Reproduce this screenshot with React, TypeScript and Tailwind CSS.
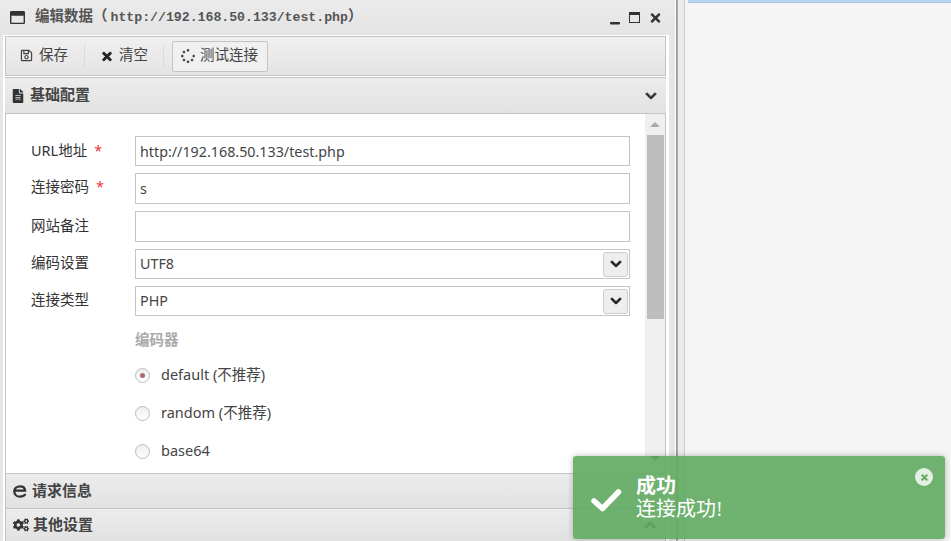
import React from 'react';
import {
  FaRegWindowMaximize,
  FaWindowMinimize,
  FaTimes,
  FaRegSave,
  FaSpinner,
  FaFileAlt,
  FaChevronDown,
  FaChevronUp,
  FaCogs,
} from 'react-icons/fa';

const uiFont = "font-['Noto_Sans','Noto_Sans_CJK_SC',sans-serif]";

const fields = [
  { label: 'URL地址', value: 'http://192.168.50.133/test.php', required: true, h: 'h-[30px]', lift: 'pb-[1px]' },
  { label: '连接密码', value: 's', required: true, h: 'h-[31px]', lift: 'pb-[3px]' },
  { label: '网站备注', value: '', required: false, h: 'h-[31px]', lift: 'pb-[1px]' },
];

const selects = [
  { label: '编码设置', value: 'UTF8' },
  { label: '连接类型', value: 'PHP' },
];

const encoders = [
  { label: 'default (不推荐)', checked: true },
  { label: 'random (不推荐)', checked: false },
  { label: 'base64', checked: false },
];

const SectionHeader: React.FC<{
  icon: React.ReactNode;
  title: string;
  chevron?: React.ReactNode;
  className: string;
  iconBox: string;
}> = ({ icon, title, chevron, className, iconBox }) => (
  <div
    className={`flex items-center shrink-0 bg-gradient-to-b from-[#ececec] to-[#e2e2e2] border-t border-[#c4c4c4] pl-[7px] pr-[9px] ${className}`}
  >
    <span className={`flex justify-start text-[#333] ${iconBox}`}>{icon}</span>
    <span className="text-[15px] font-bold text-[#444] pb-[2px]">{title}</span>
    {chevron && <span className="ml-auto text-[#333]">{chevron}</span>}
  </div>
);

const App: React.FC = () => {
  return (
    <div className={`relative flex w-[951px] h-[541px] overflow-hidden bg-[#f5f5f5] ${uiFont}`}>
      {/* Left window */}
      <div className="flex flex-col w-[675px] h-full bg-[#e6e6e6] shrink-0">
        <div className="flex items-center h-[35px] shrink-0 pl-[10px] pr-[13px] bg-gradient-to-b from-[#ebebeb] to-[#e4e4e4]">
          <FaRegWindowMaximize className="w-[15px] h-[15px] text-[#333]" />
          <span className="ml-[10px] text-[14.5px] font-bold text-[#555] font-['Liberation_Mono','Noto_Sans_CJK_SC',monospace]">
            编辑数据（<span className="ml-[3px] text-[13.2px]">http://192.168.50.133/test.php</span>）
          </span>
          <div className="ml-auto flex items-center text-[#333]">
            <FaWindowMinimize className="w-[10px] h-[10px] mt-[4px]" />
            <span className="ml-[9px] w-[11px] h-[11px] border border-[#333] border-t-[3px]" />
            <FaTimes className="ml-[9px] w-[13px] h-[14px]" />
          </div>
        </div>

        <div className="flex-1 min-h-0 flex flex-col ml-[3px] mr-[6px] bg-white border-t border-white px-[2px] pr-[3px]">
          {/* Toolbar */}
          <div className="flex items-center h-[40px] shrink-0 bg-gradient-to-b from-[#f0f0f0] to-[#e4e4e4] border border-[#c4c4c4] text-[14.5px] text-[#444]">
            <div className="flex items-center pl-[14px] w-[78px]">
              <FaRegSave className="w-[13px] h-[13px] text-[#444] mb-[1px]" />
              <span className="ml-[6px] pb-[3px]">保存</span>
            </div>
            <span className="w-px h-[25px] bg-[#d4dde0]" />
            <div className="flex items-center pl-[16px] w-[78px]">
              <FaTimes className="w-[12px] h-[13px] text-[#222] [stroke-width:30px]" />
              <span className="ml-[6px] pb-[3px]">清空</span>
            </div>
            <span className="w-px h-[25px] bg-[#d4dde0]" />
            <div className="ml-[8px] flex items-center h-[31px] w-[96px] pl-[8px] rounded-[2px] border border-[#c4c4c4] bg-[#f0f0f0]">
              <FaSpinner className="w-[14px] h-[14px] text-[#444]" />
              <span className="ml-[5px] pb-[3px]">测试连接</span>
            </div>
          </div>

          <div className="h-px bg-white shrink-0" />

          <SectionHeader
            className="h-[36px]"
            iconBox="w-[18px]"
            icon={<FaFileAlt className="w-[12px] h-[14px]" />}
            title="基础配置"
            chevron={<FaChevronDown className="w-[12px] h-[12px] [stroke-width:40px]" />}
          />

          {/* Form body */}
          <div className="flex h-[360px] shrink-0 border-x border-t border-[#c4c4c4] overflow-hidden">
            <div className="flex-1 min-w-0 pt-[22px] pl-[25px] text-[14.5px] text-[#333]">
              <div className="flex flex-col gap-[7px]">
                {fields.map((f) => (
                  <div key={f.label} className={`flex items-center ${f.h}`}>
                    <label className={`w-[104px] shrink-0 ${f.lift}`}>
                      {f.label}
                      {f.required && <span className="ml-[7px] text-[#e33]">*</span>}
                    </label>
                    <input
                      readOnly
                      value={f.value}
                      className="w-[495px] h-full border border-[#c4c4c4] px-[4px] text-[14.3px] text-[#444] bg-white outline-none"
                    />
                  </div>
                ))}
                {selects.map((s) => (
                  <div key={s.label} className="flex items-center h-[30px]">
                    <label className="w-[104px] shrink-0 pb-[2px]">{s.label}</label>
                    <div className="flex items-center justify-between w-[495px] h-full border border-[#c4c4c4] pl-[4px] pr-[1px] text-[14.3px] text-[#444] bg-white">
                      <span>{s.value}</span>
                      <span className="flex items-center justify-center w-[25px] h-[25px] rounded-[3px] border border-[#ccc] bg-[#eeeeee] text-[#222]">
                        <FaChevronDown className="w-[12px] h-[12px] [stroke-width:40px]" />
                      </span>
                    </div>
                  </div>
                ))}
              </div>
              <div className="ml-[104px] mt-[13px] font-bold text-[#aaa] leading-[20px]">编码器</div>
              <div className="ml-[104px] mt-[16px] flex flex-col gap-[18px]">
                {encoders.map((e) => (
                  <div key={e.label} className="flex items-center h-[20px]">
                    <span className="flex items-center justify-center w-[15px] h-[15px] rounded-full border border-[#bbb] bg-gradient-to-b from-[#eee] to-white">
                      {e.checked && <span className="w-[5px] h-[5px] rounded-full bg-[#a86a6a]" />}
                    </span>
                    <span className="ml-[11px] text-[#444]">{e.label}</span>
                  </div>
                ))}
              </div>
            </div>
            {/* Scrollbar */}
            <div className="relative flex flex-col items-center w-[20px] shrink-0 bg-[#f0f0f0]">
              <span className="mt-[8px] w-0 h-0 border-x-[5px] border-x-transparent border-b-[5px] border-b-[#aaa]" />
              <span className="mt-[8px] w-[17px] h-[184px] bg-[#bdbdbd]" />
              <span className="mt-[137px] w-0 h-0 border-x-[5px] border-x-transparent border-t-[5px] border-t-[#555]" />
            </div>
          </div>

          <SectionHeader
            className="h-[35px] border-x border-x-[#c4c4c4]"
            iconBox="w-[19px]"
            icon={
              <svg viewBox="0 0 14 13" className="w-[14px] h-[13px]" fill="none" stroke="currentColor" strokeWidth="2.3">
                <path d="M2.5 5.6h9.6C11.9 3 10 1.3 7.2 1.3 3.9 1.3 1.3 3.3 1.3 6.4c0 3.2 2.5 5.3 5.7 5.3 2.4 0 4.2-.8 5.6-2.6" />
              </svg>
            }
            title="请求信息"
          />
          <SectionHeader
            className="h-[33px] border-x border-x-[#c4c4c4]"
            iconBox="w-[20px]"
            icon={<FaCogs className="w-[16px] h-[14px]" />}
            title="其他设置"
            chevron={<FaChevronUp className="w-[12px] h-[12px] [stroke-width:40px]" />}
          />
        </div>
      </div>

      {/* Splitter */}
      <div className="flex w-[10px] h-full shrink-0">
        <span className="w-px bg-white" />
        <span className="w-[2px] bg-gradient-to-r from-[#8f8f8f] to-[#b5b5b5]" />
        <span className="flex-1 bg-[#ececec] border-r border-[#cccccc]" />
      </div>

      {/* Right panel */}
      <div className="flex-1 pl-[3px]">
        <div className="h-[3px] bg-[#b8d4f4] border-b border-[#a9c4e4]" />
      </div>

      {/* Toast */}
      <div className="absolute left-[573px] top-[456px] w-[372px] h-[83px] rounded-[3px] bg-[#60aa60]/90 shadow-[0_0_6px_rgba(0,0,0,0.25)] text-white flex items-center font-['Liberation_Serif','Noto_Sans_CJK_SC',serif]">
        <svg viewBox="0 0 32 24" className="ml-[17px] w-[32px] h-[24px] mt-[4px]" fill="none" stroke="currentColor" strokeWidth="5.5" strokeLinecap="round" strokeLinejoin="round">
          <path d="M4 13l8.5 7.5L28.5 4" />
        </svg>
        <div className="ml-[14px] text-[20px] leading-[23px]">
          <div className="font-bold">成功</div>
          <div>连接成功!</div>
        </div>
        <span className="absolute right-[12px] top-[12px] flex items-center justify-center w-[18px] h-[18px] rounded-full bg-white/80 text-[#60aa60]">
          <FaTimes className="w-[9px] h-[9px] [stroke-width:30px]" />
        </span>
      </div>
    </div>
  );
};

export default App;
